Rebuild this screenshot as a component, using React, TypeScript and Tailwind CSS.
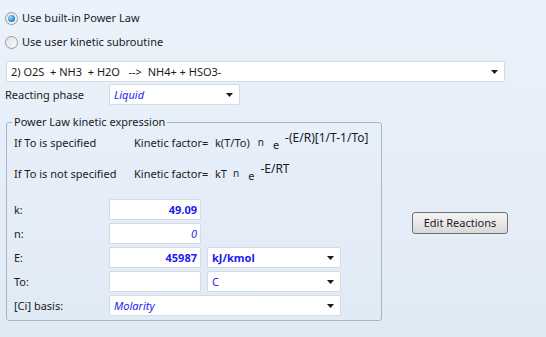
function Caret() {
  return (
    <svg width="7" height="4" viewBox="0 0 7 4" className="shrink-0">
      <path d="M0 0h7L3.5 4z" fill="#1a1a1a" />
    </svg>
  );
}

function Radio({ checked, label }: { checked?: boolean; label: string }) {
  return (
    <label className="flex h-6 items-center gap-[4px] pl-[5px]">
      <span className="flex h-[13px] w-[13px] items-center justify-center rounded-full border border-[#8e9aa8] bg-gradient-to-br from-[#e2e2e2] to-[#fbfbfb]">
        {checked ? (
          <span className="h-[7px] w-[7px] rounded-full bg-[radial-gradient(circle_at_35%_35%,#9fdcff,#1a7fc4_70%,#0b5a96)]" />
        ) : null}
      </span>
      <span>{label}</span>
    </label>
  );
}

function Select({
  value,
  className,
  valueClass,
}: {
  value: string;
  className: string;
  valueClass?: string;
}) {
  return (
    <div
      className={`flex h-[21px] items-center justify-between rounded-[2px] border border-[#d3dbe5] bg-white pl-[4px] pr-[6px] ${className}`}
    >
      <span className={valueClass}>{value}</span>
      <Caret />
    </div>
  );
}

function NumField({ value, valueClass }: { value?: string; valueClass?: string }) {
  return (
    <div className="flex h-[21px] w-[92px] items-center justify-end rounded-[1px] border border-[#d3dbe5] bg-white pr-[3px]">
      <span className={valueClass}>{value}</span>
    </div>
  );
}

export default function App() {
  return (
    <div className="h-[337px] w-[546px] overflow-hidden bg-gradient-to-b from-[#ebf2fc] to-[#e0eaf5] pt-[6px] font-['Noto_Sans',sans-serif] text-[11px] leading-[16px] text-[#1b1b1b]">
      <Radio checked label="Use built-in Power Law" />
      <Radio label="Use user kinetic subroutine" />

      <Select
        value="2) O2S  + NH3  + H2O   -->  NH4+ + HSO3-"
        className="ml-[6px] mt-[7px] w-[499px] whitespace-pre"
      />

      <div className="mt-[2px] flex items-center">
        <span className="w-[109px] pl-[5px]">Reacting phase</span>
        <Select value="Liquid" className="w-[131px]" valueClass="italic text-[#1c1cf0]" />
      </div>

      <div className="flex items-start">
        <fieldset className="ml-[6px] mt-[9px] h-[207px] w-[376px] rounded-[3px] border border-[#a7b5c6] pl-[7px]">
          <legend className="-ml-[2px] px-[2px]">Power Law kinetic expression</legend>

          <div className="mt-[5px] flex items-center">
            <span className="w-[120px]">If To is specified</span>
            <span className="w-[81px]">Kinetic factor=</span>
            <span>k(T/To)</span>
            <span className="relative -top-[1px] ml-[8px] text-[10px]">n</span>
            <span className="relative top-[2px] ml-[9px] text-[11px]">e</span>
            <span className="relative -top-[5px] ml-[6px] text-[12px]">-(E/R)[1/T-1/To]</span>
          </div>

          <div className="mt-[15px] flex items-center">
            <span className="w-[120px]">If To is not specified</span>
            <span className="w-[81px]">Kinetic factor=</span>
            <span>kT</span>
            <span className="relative -top-[1px] ml-[6px] text-[10px]">n</span>
            <span className="relative top-[2px] ml-[9px] text-[11px]">e</span>
            <span className="relative -top-[5px] ml-[6px] text-[12px]">-E/RT</span>
          </div>

          <div className="mt-[17px] grid grid-cols-[89px_92px_134px] items-center gap-x-[6px] gap-y-[3px]">
            <span>k:</span>
            <NumField value="49.09" valueClass="font-bold text-[#1c1cf0]" />
            <span />

            <span>n:</span>
            <NumField value="0" valueClass="italic text-[#1c1cf0]" />
            <span />

            <span>E:</span>
            <NumField value="45987" valueClass="font-bold text-[#1c1cf0]" />
            <Select value="kJ/kmol" className="w-[134px]" valueClass="font-bold text-[#1c1cf0]" />

            <span>To:</span>
            <NumField />
            <Select value="C" className="w-[134px]" valueClass="text-[#1c1cf0]" />

            <span>[Ci] basis:</span>
            <Select
              value="Molarity"
              className="col-span-2 w-[232px]"
              valueClass="italic text-[#1c1cf0]"
            />
          </div>
        </fieldset>

        <button
          type="button"
          className="ml-[30px] mt-[107px] h-[22px] w-[96px] rounded-[3px] border border-[#707070] bg-gradient-to-b from-[#f3f3f3] via-[#e8e8e8] to-[#d8d8d8] text-[#1b1b1b]"
        >
          Edit Reactions
        </button>
      </div>
    </div>
  );
}
